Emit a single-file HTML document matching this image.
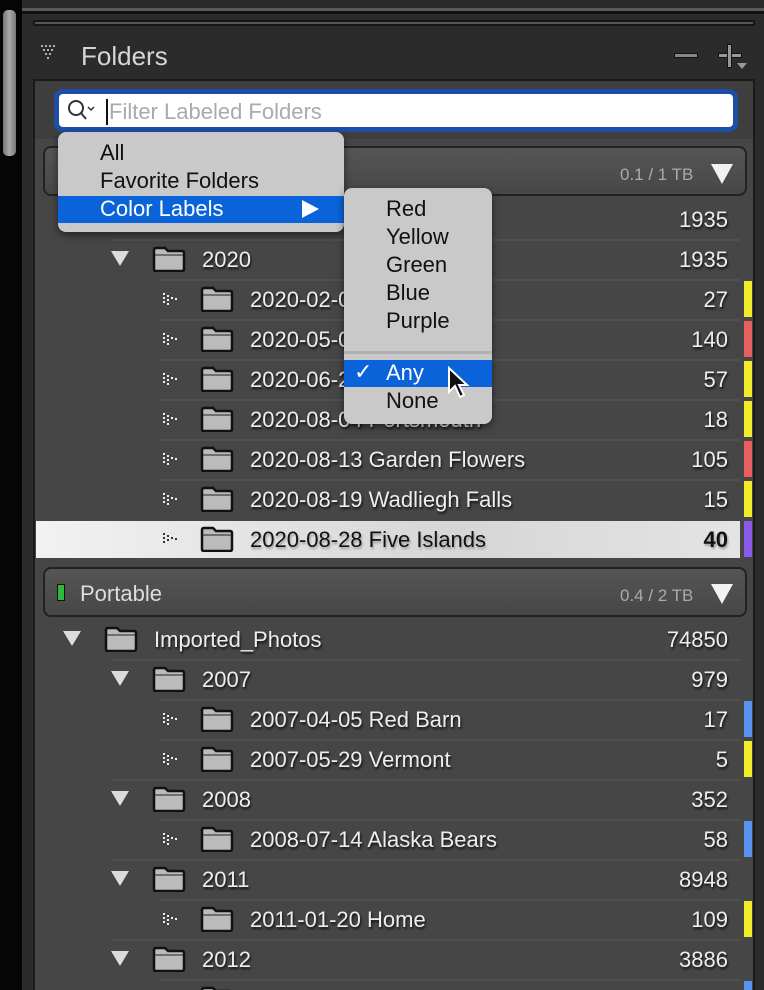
<!DOCTYPE html>
<html><head><meta charset="utf-8"><style>
*{margin:0;padding:0;box-sizing:border-box}
html,body{width:764px;height:990px;overflow:hidden}
body{background:#2b2b2b;font-family:"Liberation Sans",sans-serif;position:relative}
.a{position:absolute}
.row{position:absolute;left:36px;width:704px;height:40px;color:#eee;font-size:22px;text-shadow:1px 2px 2px #111;overflow:hidden}
.row .t{position:absolute;top:8px;white-space:nowrap}
.row .n{position:absolute;right:12px;top:8px}
.line{position:absolute;height:2px;background:#505050}
.strip{position:absolute;left:744px;width:8px;height:36px}
.tri{position:absolute;width:0;height:0;border-left:9px solid transparent;border-right:9px solid transparent;border-top:15px solid #ddd}
.vol{position:absolute;left:43px;width:704px;height:50px;border:2px solid #222;border-radius:8px;background:linear-gradient(#555,#474747);}
.menu{position:absolute;background:#c9c9c9;border-radius:8px;box-shadow:0 3px 8px rgba(0,0,0,.5);font-size:22px;color:#111}
.menu div{position:absolute;white-space:nowrap}
#wrap{position:absolute;left:0;top:0;width:764px;height:990px;overflow:hidden}
</style></head><body><div id="wrap">
<div class="a" style="left:0;top:0;width:22px;height:990px;background:#050505"></div>
<div class="a" style="left:3px;top:10px;width:13px;height:146px;background:linear-gradient(90deg,#777,#aaa,#777);border-radius:5px"></div>
<div class="a" style="left:22px;top:8px;width:742px;height:3px;background:#5a5a5a"></div>
<div class="a" style="left:22px;top:11px;width:742px;height:3px;background:#111"></div>
<div class="a" style="left:33px;top:20px;width:722px;height:6px;border:2px solid #151515;background:#555"></div>
<svg class="a" style="left:40px;top:44px" width="20" height="20"><g fill="#ddd"><circle cx="2" cy="2" r="1"/><circle cx="6" cy="2" r="1"/><circle cx="10" cy="2" r="1"/><circle cx="14" cy="2" r="1"/><circle cx="4" cy="6" r="1"/><circle cx="8" cy="6" r="1"/><circle cx="12" cy="6" r="1"/><circle cx="6" cy="10" r="1"/><circle cx="10" cy="10" r="1"/><circle cx="8" cy="14" r="1"/></g></svg>
<div class="a" style="left:81px;top:41px;font-size:26px;color:#d6d6d6">Folders</div>
<div class="a" style="left:674px;top:53px;width:24px;height:5px;background:#888;border:1px solid #111"></div>
<div class="a" style="left:718px;top:53px;width:24px;height:5px;background:#999;border:1px solid #111"></div>
<div class="a" style="left:727px;top:44px;width:5px;height:24px;background:#999;border:1px solid #111"></div>
<div class="tri" style="left:737px;top:63px;border-left-width:5px;border-right-width:5px;border-top:6px solid #999"></div>
<div class="a" style="left:33px;top:79px;width:722px;height:920px;background:#464646;border:2px solid #1a1a1a"></div>
<div class="a" style="left:35px;top:81px;width:718px;height:58px;background:#3e3e3e"></div>
<div class="a" style="left:54px;top:89px;width:684px;height:43px;border:5px solid #1d4fa6;border-radius:9px;background:#fff"></div>
<svg class="a" style="left:66px;top:99px" width="32" height="24"><circle cx="10" cy="9" r="7" fill="none" stroke="#333" stroke-width="2"/><line x1="15" y1="14" x2="20" y2="20" stroke="#333" stroke-width="2"/><polyline points="22,8 25,11 28,8" fill="none" stroke="#333" stroke-width="1.5"/></svg>
<div class="a" style="left:106px;top:99px;width:2px;height:26px;background:#111"></div>
<div class="a" style="left:109px;top:99px;font-size:22px;color:#aaa">Filter Labeled Folders</div>
<div class="vol" style="top:146px"></div>
<div class="a" style="left:620px;top:165px;font-size:17px;color:#aaa">0.1 / 1 TB</div>
<div class="tri" style="left:711px;top:164px;border-left-width:11px;border-right-width:11px;border-top:20px solid #f2f2f2"></div>

<div class="line" style="left:112px;top:239px;width:628px"></div>
<div class="line" style="left:160px;top:279px;width:580px"></div>
<div class="line" style="left:160px;top:319px;width:580px"></div>
<div class="line" style="left:160px;top:359px;width:580px"></div>
<div class="line" style="left:160px;top:399px;width:580px"></div>
<div class="line" style="left:160px;top:439px;width:580px"></div>
<div class="line" style="left:160px;top:479px;width:580px"></div>
<div class="line" style="left:112px;top:659px;width:628px"></div>
<div class="line" style="left:160px;top:699px;width:580px"></div>
<div class="line" style="left:160px;top:739px;width:580px"></div>
<div class="line" style="left:112px;top:779px;width:628px"></div>
<div class="line" style="left:160px;top:819px;width:580px"></div>
<div class="line" style="left:112px;top:859px;width:628px"></div>
<div class="line" style="left:160px;top:899px;width:580px"></div>
<div class="line" style="left:112px;top:939px;width:628px"></div>
<div class="line" style="left:160px;top:979px;width:580px"></div>

<svg width="0" height="0" style="position:absolute"><defs>
<symbol id="f" viewBox="0 0 34 26"><path d="M2 4 Q2 2 4 2 H13 L16 5 H30 Q32 5 32 7 V23 Q32 25 30 25 H4 Q2 25 2 23 Z" fill="#bbb" stroke="#111" stroke-width="2.5"/><path d="M3 9 H31" stroke="#555" stroke-width="1.5"/></symbol>
<symbol id="d" viewBox="0 0 16 14"><g fill="#eee"><rect x="0" y="1" width="2" height="2"/><rect x="0" y="5" width="2" height="2"/><rect x="0" y="9" width="2" height="2"/><rect x="4" y="3" width="2" height="2"/><rect x="4" y="7" width="2" height="2"/><rect x="8" y="5" width="2" height="2"/><rect x="4" y="11" width="2" height="2"/><rect x="12" y="6" width="2" height="2"/></g></symbol>
</defs></svg>

<div class="row" style="top:199px"><svg style="position:absolute;left:68px;top:7px" width="32" height="25"><use href="#f"/></svg><span class="n">1935</span></div>
<div class="row" style="top:239px"><div class="tri" style="left:75px;top:12px"></div><svg style="position:absolute;left:116px;top:7px" width="34" height="26"><use href="#f"/></svg><span class="t" style="left:166px">2020</span><span class="n">1935</span></div>
<div class="row" style="top:279px"><svg style="position:absolute;left:127px;top:13px" width="16" height="14"><use href="#d"/></svg><svg style="position:absolute;left:164px;top:7px" width="34" height="26"><use href="#f"/></svg><span class="t" style="left:214px">2020-02-08 Snow</span><span class="n">27</span></div>
<div class="strip" style="top:281px;background:#f2ec2a"></div>
<div class="row" style="top:319px"><svg style="position:absolute;left:127px;top:13px" width="16" height="14"><use href="#d"/></svg><svg style="position:absolute;left:164px;top:7px" width="34" height="26"><use href="#f"/></svg><span class="t" style="left:214px">2020-05-05 Lilac Flower</span><span class="n">140</span></div>
<div class="strip" style="top:321px;background:#e8605e"></div>
<div class="row" style="top:359px"><svg style="position:absolute;left:127px;top:13px" width="16" height="14"><use href="#d"/></svg><svg style="position:absolute;left:164px;top:7px" width="34" height="26"><use href="#f"/></svg><span class="t" style="left:214px">2020-06-21 Beach</span><span class="n">57</span></div>
<div class="strip" style="top:361px;background:#f2ec2a"></div>
<div class="row" style="top:399px"><svg style="position:absolute;left:127px;top:13px" width="16" height="14"><use href="#d"/></svg><svg style="position:absolute;left:164px;top:7px" width="34" height="26"><use href="#f"/></svg><span class="t" style="left:214px">2020-08-04 Portsmouth</span><span class="n">18</span></div>
<div class="strip" style="top:401px;background:#f2ec2a"></div>
<div class="row" style="top:439px"><svg style="position:absolute;left:127px;top:13px" width="16" height="14"><use href="#d"/></svg><svg style="position:absolute;left:164px;top:7px" width="34" height="26"><use href="#f"/></svg><span class="t" style="left:214px">2020-08-13 Garden Flowers</span><span class="n">105</span></div>
<div class="strip" style="top:441px;background:#e8605e"></div>
<div class="row" style="top:479px"><svg style="position:absolute;left:127px;top:13px" width="16" height="14"><use href="#d"/></svg><svg style="position:absolute;left:164px;top:7px" width="34" height="26"><use href="#f"/></svg><span class="t" style="left:214px">2020-08-19 Wadliegh Falls</span><span class="n">15</span></div>
<div class="strip" style="top:481px;background:#f2ec2a"></div>
<div class="row" style="top:521px;height:37px;background:linear-gradient(90deg,#f2f2f2,#d6d6d6 60%,#e4e4e4);color:#111;text-shadow:1px 2px 2px #999"><svg style="position:absolute;left:127px;top:11px" width="16" height="14"><g fill="#333"><rect x="0" y="1" width="2" height="2"/><rect x="0" y="5" width="2" height="2"/><rect x="0" y="9" width="2" height="2"/><rect x="4" y="3" width="2" height="2"/><rect x="4" y="7" width="2" height="2"/><rect x="8" y="5" width="2" height="2"/><rect x="12" y="6" width="2" height="2"/></g></svg><svg style="position:absolute;left:164px;top:5px" width="34" height="26"><use href="#f"/></svg><span class="t" style="left:214px;top:6px">2020-08-28 Five Islands</span><span class="n" style="top:6px;font-weight:bold">40</span></div>
<div class="strip" style="top:521px;background:#8a5ae8"></div>

<div class="vol" style="top:567px"></div>
<div class="a" style="left:57px;top:584px;width:8px;height:17px;background:#2fb83a;border:1px solid #111"></div>
<div class="a" style="left:80px;top:581px;font-size:22px;color:#ddd">Portable</div>
<div class="a" style="left:620px;top:586px;font-size:17px;color:#aaa">0.4 / 2 TB</div>
<div class="tri" style="left:711px;top:584px;border-left-width:11px;border-right-width:11px;border-top:20px solid #f2f2f2"></div>

<div class="row" style="top:619px"><div class="tri" style="left:27px;top:12px"></div><svg style="position:absolute;left:68px;top:7px" width="34" height="26"><use href="#f"/></svg><span class="t" style="left:118px">Imported_Photos</span><span class="n">74850</span></div>
<div class="row" style="top:659px"><div class="tri" style="left:75px;top:12px"></div><svg style="position:absolute;left:116px;top:7px" width="34" height="26"><use href="#f"/></svg><span class="t" style="left:166px">2007</span><span class="n">979</span></div>
<div class="row" style="top:699px"><svg style="position:absolute;left:127px;top:13px" width="16" height="14"><use href="#d"/></svg><svg style="position:absolute;left:164px;top:7px" width="34" height="26"><use href="#f"/></svg><span class="t" style="left:214px">2007-04-05 Red Barn</span><span class="n">17</span></div>
<div class="strip" style="top:701px;background:#5a92f0"></div>
<div class="row" style="top:739px"><svg style="position:absolute;left:127px;top:13px" width="16" height="14"><use href="#d"/></svg><svg style="position:absolute;left:164px;top:7px" width="34" height="26"><use href="#f"/></svg><span class="t" style="left:214px">2007-05-29 Vermont</span><span class="n">5</span></div>
<div class="strip" style="top:741px;background:#f2ec2a"></div>
<div class="row" style="top:779px"><div class="tri" style="left:75px;top:12px"></div><svg style="position:absolute;left:116px;top:7px" width="34" height="26"><use href="#f"/></svg><span class="t" style="left:166px">2008</span><span class="n">352</span></div>
<div class="row" style="top:819px"><svg style="position:absolute;left:127px;top:13px" width="16" height="14"><use href="#d"/></svg><svg style="position:absolute;left:164px;top:7px" width="34" height="26"><use href="#f"/></svg><span class="t" style="left:214px">2008-07-14 Alaska Bears</span><span class="n">58</span></div>
<div class="strip" style="top:821px;background:#5a92f0"></div>
<div class="row" style="top:859px"><div class="tri" style="left:75px;top:12px"></div><svg style="position:absolute;left:116px;top:7px" width="34" height="26"><use href="#f"/></svg><span class="t" style="left:166px">2011</span><span class="n">8948</span></div>
<div class="row" style="top:899px"><svg style="position:absolute;left:127px;top:13px" width="16" height="14"><use href="#d"/></svg><svg style="position:absolute;left:164px;top:7px" width="34" height="26"><use href="#f"/></svg><span class="t" style="left:214px">2011-01-20 Home</span><span class="n">109</span></div>
<div class="strip" style="top:901px;background:#f2ec2a"></div>
<div class="row" style="top:939px"><div class="tri" style="left:75px;top:12px"></div><svg style="position:absolute;left:116px;top:7px" width="34" height="26"><use href="#f"/></svg><span class="t" style="left:166px">2012</span><span class="n">3886</span></div>
<div class="row" style="top:979px;height:11px"><svg style="position:absolute;left:164px;top:7px" width="34" height="26"><use href="#f"/></svg></div>
<div class="strip" style="top:981px;height:9px;background:#5a92f0"></div>

<div class="menu" style="left:58px;top:132px;width:286px;height:100px">
<div style="left:42px;top:8px">All</div>
<div style="left:42px;top:36px">Favorite Folders</div>
<div style="left:0;top:64px;width:286px;height:27px;background:#0b63d9"></div>
<div style="left:42px;top:64px;color:#fff">Color Labels</div>
<div style="left:244px;top:68px;width:0;height:0;border-top:9px solid transparent;border-bottom:9px solid transparent;border-left:17px solid #fff"></div>
</div>
<div class="menu" style="left:344px;top:188px;width:148px;height:236px">
<div style="left:42px;top:8px">Red</div>
<div style="left:42px;top:36px">Yellow</div>
<div style="left:42px;top:64px">Green</div>
<div style="left:42px;top:92px">Blue</div>
<div style="left:42px;top:120px">Purple</div>
<div style="left:0;top:163px;width:148px;height:3px;background:#b0b0b0"></div>
<div style="left:0;top:172px;width:148px;height:27px;background:#0b63d9"></div>
<div style="left:10px;top:171px;color:#fff">✓</div>
<div style="left:42px;top:172px;color:#fff">Any</div>
<div style="left:42px;top:200px">None</div>
</div>
<svg class="a" style="left:447px;top:366px" width="26" height="36"><path d="M2 2 V26 L8 20 L13 31 L17 29 L12 19 H20 Z" fill="#111" stroke="#fff" stroke-width="2"/></svg>
</div></body></html>
